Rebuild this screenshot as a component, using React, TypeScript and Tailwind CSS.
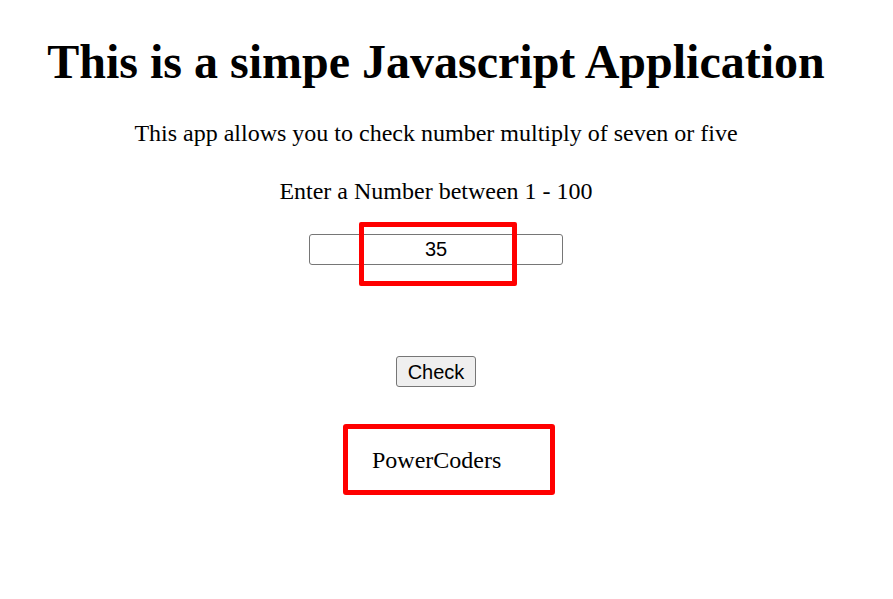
export default function App() {
  return (
    <div className="min-h-[599px] w-[872px] bg-white text-black font-['Liberation_Serif',serif] flex flex-col items-center">
      <h1 className="mt-[34px] text-[48px] font-bold leading-[56px]">This is a simpe Javascript Application</h1>
      <p className="mt-[29px] text-[24px] leading-[28px]">This app allows you to check number multiply of seven or five</p>
      <p className="mt-[30px] text-[24px] leading-[28px]">Enter a Number between 1 - 100</p>
      <div className="relative mt-[29px]">
        <input
          type="text"
          defaultValue="35"
          className="w-[254px] h-[31px] border border-[#767676] rounded-[3px] text-center text-[20px] font-['Liberation_Sans',sans-serif] outline-none"
        />
        <div className="absolute left-[50px] top-[-12px] w-[158px] h-[64px] border-[5px] border-[#ff0000] rounded-[2px] pointer-events-none" />
      </div>
      <button className="mt-[91px] h-[31px] px-[11px] border border-[#767676] rounded-[3px] bg-[#efefef] text-[20px] font-['Liberation_Sans',sans-serif]">
        Check
      </button>
      <div className="mt-[37px] ml-[26px] w-[212px] h-[71px] border-[5px] border-[#ff0000] rounded-[3px] flex items-center pl-[24px]">
        <span className="text-[24px] leading-[28px]">PowerCoders</span>
      </div>
    </div>
  );
}
